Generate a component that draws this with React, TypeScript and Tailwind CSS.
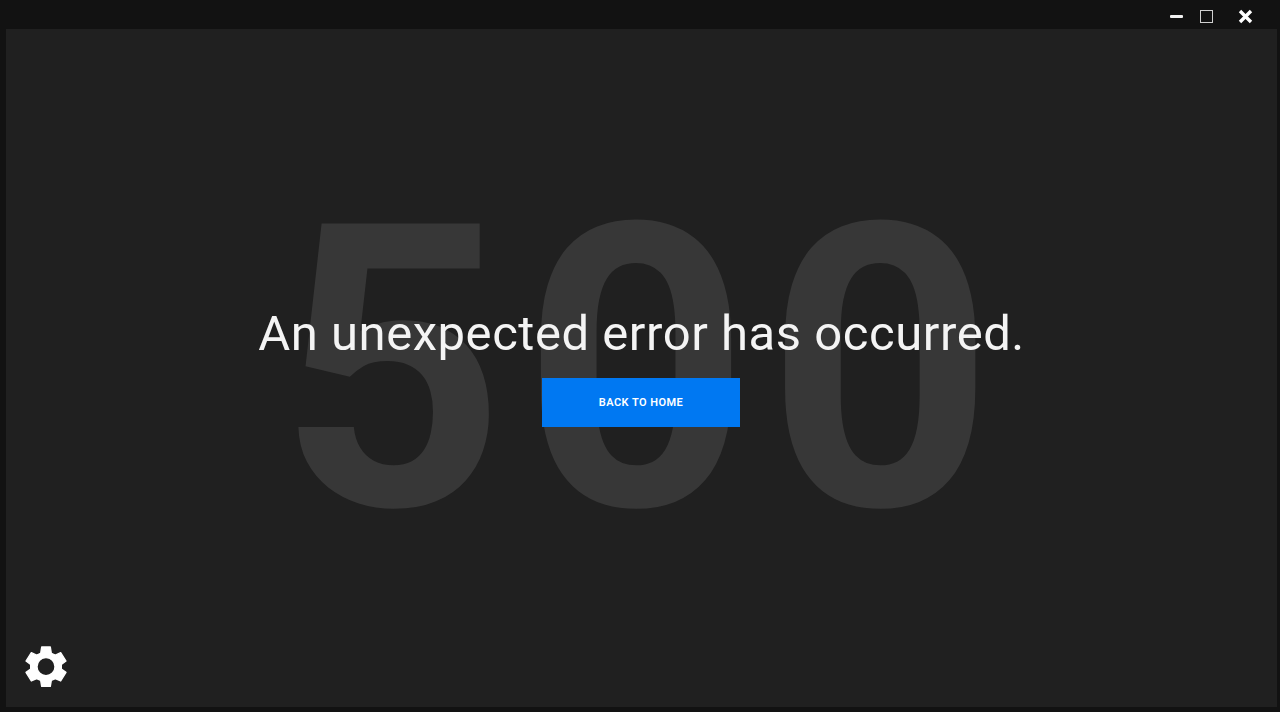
import React from 'react';

function WindowControls() {
  return (
    <div className="flex h-[29px] shrink-0 items-center justify-end pt-1 pr-6">
      <button aria-label="Minimize" className="h-[3px] w-[13px] rounded-[1px] bg-[#f2f2f2]" />
      <button aria-label="Maximize" className="ml-[17px] h-[13px] w-[13px] border border-[#d0d0d0]" />
      <button aria-label="Close" className="ml-[25px]">
        <svg width="15" height="15" viewBox="0 0 15 15" fill="none" stroke="#fff" strokeWidth="3.4">
          <path d="M2 2L13 13M13 2L2 13" />
        </svg>
      </button>
    </div>
  );
}

function GearIcon() {
  return (
    <svg
      width="48"
      height="48"
      viewBox="0 0 144 144"
      fill="currentColor"
      stroke="currentColor"
      strokeWidth="4"
      strokeLinejoin="round"
      fillRule="evenodd"
    >
      <path d="M59 12H85L88 31L100 36L116 29L132 54L118 64V78L132 88L116 114L100 107L88 112L85 130H59L56 112L44 107L28 114L12 88L26 78V64L12 54L28 29L44 36L56 31ZM72 44A27 27 0 1 0 72 98A27 27 0 1 0 72 44Z" />
    </svg>
  );
}

export default function App() {
  return (
    <div className="flex h-screen flex-col bg-[#121212] pr-[3px] pb-[5px] pl-[6px] font-['Roboto',sans-serif]">
      <WindowControls />

      <main className="relative grid flex-1 grid-cols-1 grid-rows-1 overflow-hidden bg-[#202020]">
        <div className="col-start-1 row-start-1 flex items-center justify-center pt-[3px] pl-[6px] text-[396px] leading-none font-[670] tracking-[17px] text-[#373737] select-none">
          500
        </div>

        <div className="relative col-start-1 row-start-1 flex flex-col items-center pt-[276px] pr-px">
          <h1 className="pl-px text-[49px] leading-[58px] font-[450] tracking-[0.55px] whitespace-nowrap text-[#f4f4f4]">
            An unexpected error has occurred.
          </h1>
          <button className="mt-[15px] h-[49px] w-[198px] bg-[#0078f2] pt-0.5 text-[11px] font-semibold tracking-[0.45px] text-white uppercase">
            Back to home
          </button>
        </div>

        <button aria-label="Settings" className="absolute bottom-[16px] left-[16px] text-white">
          <GearIcon />
        </button>
      </main>
    </div>
  );
}
